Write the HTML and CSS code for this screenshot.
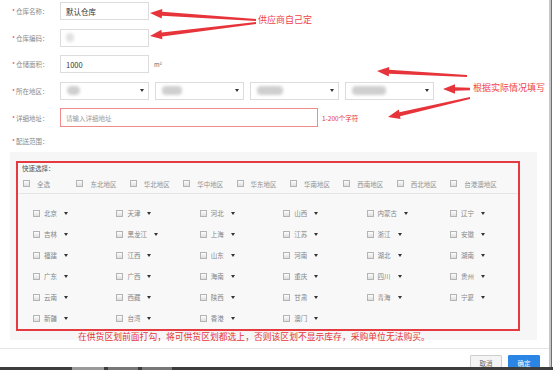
FILE: index.html
```html
<!DOCTYPE html>
<html lang="zh-CN">
<head>
    <meta charset="UTF-8">
    <title>仓库设置</title>
    <link rel="stylesheet" href="styles.css">
</head>
<body>
    <div class="screen">
        <div class="page">
            <div class="form">
                <div class="row">
                    <span class="label"><span class="star">*</span>仓库名称：</span>
                    <div class="input">默认仓库</div>
                </div>
                <div class="row">
                    <span class="label"><span class="star">*</span>仓库编码：</span>
                    <div class="input"><span class="blob blob-code"></span></div>
                </div>
                <div class="row">
                    <span class="label"><span class="star">*</span>仓储面积：</span>
                    <div class="input">1000</div>
                    <span class="unit">m²</span>
                </div>
                <div class="row">
                    <span class="label"><span class="star">*</span>所在地区：</span>
                    <div class="selects">
                        <div class="input select"><span class="blob blob-1"></span><i class="caret"></i></div>
                        <div class="input select"><span class="blob blob-2"></span><i class="caret"></i></div>
                        <div class="input select"><span class="blob blob-3"></span><i class="caret"></i></div>
                        <div class="input select"><span class="blob blob-4"></span><i class="caret"></i></div>
                    </div>
                </div>
                <div class="row row-address">
                    <span class="label"><span class="star">*</span>详细地址：</span>
                    <div class="input address">请输入详细地址</div>
                    <span class="hint">1-200个字符</span>
                </div>
            </div>

            <div class="range-label"><span class="star">*</span>配送范围：</div>

            <div class="panel">
                <div class="region-box">
                    <div class="quick-title">快速选择：</div>
                    <div class="quick">
                        <label class="quick-item"><i class="check"></i>全选</label>
                        <label class="quick-item"><i class="check"></i>东北地区</label>
                        <label class="quick-item"><i class="check"></i>华北地区</label>
                        <label class="quick-item"><i class="check"></i>华中地区</label>
                        <label class="quick-item"><i class="check"></i>华东地区</label>
                        <label class="quick-item"><i class="check"></i>华南地区</label>
                        <label class="quick-item"><i class="check"></i>西南地区</label>
                        <label class="quick-item"><i class="check"></i>西北地区</label>
                        <label class="quick-item"><i class="check"></i>台港澳地区</label>
                    </div>
                    <div class="sep"></div>
                    <div class="provinces">
                        <label class="item"><i class="check"></i>北京<i class="caret"></i></label>
                        <label class="item"><i class="check"></i>天津<i class="caret"></i></label>
                        <label class="item"><i class="check"></i>河北<i class="caret"></i></label>
                        <label class="item"><i class="check"></i>山西<i class="caret"></i></label>
                        <label class="item"><i class="check"></i>内蒙古<i class="caret"></i></label>
                        <label class="item"><i class="check"></i>辽宁<i class="caret"></i></label>

                        <label class="item"><i class="check"></i>吉林<i class="caret"></i></label>
                        <label class="item"><i class="check"></i>黑龙江<i class="caret"></i></label>
                        <label class="item"><i class="check"></i>上海<i class="caret"></i></label>
                        <label class="item"><i class="check"></i>江苏<i class="caret"></i></label>
                        <label class="item"><i class="check"></i>浙江<i class="caret"></i></label>
                        <label class="item"><i class="check"></i>安徽<i class="caret"></i></label>

                        <label class="item"><i class="check"></i>福建<i class="caret"></i></label>
                        <label class="item"><i class="check"></i>江西<i class="caret"></i></label>
                        <label class="item"><i class="check"></i>山东<i class="caret"></i></label>
                        <label class="item"><i class="check"></i>河南<i class="caret"></i></label>
                        <label class="item"><i class="check"></i>湖北<i class="caret"></i></label>
                        <label class="item"><i class="check"></i>湖南<i class="caret"></i></label>

                        <label class="item"><i class="check"></i>广东<i class="caret"></i></label>
                        <label class="item"><i class="check"></i>广西<i class="caret"></i></label>
                        <label class="item"><i class="check"></i>海南<i class="caret"></i></label>
                        <label class="item"><i class="check"></i>重庆<i class="caret"></i></label>
                        <label class="item"><i class="check"></i>四川<i class="caret"></i></label>
                        <label class="item"><i class="check"></i>贵州<i class="caret"></i></label>

                        <label class="item"><i class="check"></i>云南<i class="caret"></i></label>
                        <label class="item"><i class="check"></i>西藏<i class="caret"></i></label>
                        <label class="item"><i class="check"></i>陕西<i class="caret"></i></label>
                        <label class="item"><i class="check"></i>甘肃<i class="caret"></i></label>
                        <label class="item"><i class="check"></i>青海<i class="caret"></i></label>
                        <label class="item"><i class="check"></i>宁夏<i class="caret"></i></label>

                        <label class="item"><i class="check"></i>新疆<i class="caret"></i></label>
                        <label class="item"><i class="check"></i>台湾<i class="caret"></i></label>
                        <label class="item"><i class="check"></i>香港<i class="caret"></i></label>
                        <label class="item"><i class="check"></i>澳门<i class="caret"></i></label>
                    </div>
                </div>
                <p class="tip">在供货区划前面打勾，将可供货区划都选上，否则该区划不显示库存，采购单位无法购买。</p>
            </div>

            <div class="footer">
                <button class="btn btn-cancel">取消</button>
                <button class="btn btn-ok">确定</button>
            </div>
        </div>
        <div class="edge"></div>
    </div>
    <div class="taskbar">
        <span class="task task-a"></span>
        <span class="task task-b"></span>
        <span class="task task-c"></span>
    </div>

    <!-- annotations drawn over the form -->
    <div class="notes">
        <span class="note note-supplier">供应商自己定</span>
        <span class="note note-actual">根据实际情况填写</span>
        <svg class="arrows" width="553" height="370" viewBox="0 0 553 370">
            <polygon points="256,19 162.1,11.8 162.3,9 150,13 161.7,18.6 161.9,15.8 256,21"/>
            <polygon points="256,22 161.7,32.5 161.4,29.7 150,36 162.4,39.3 162.1,36.5 256,24"/>
            <polygon points="467,75 389.1,69.7 389.2,66.9 377,71 388.8,76.5 388.9,73.7 467,77"/>
            <polygon points="470,87.8 455,87.3 455,84.3 443,89 455,93.7 455,90.7 470,90.2"/>
            <polygon points="470,97 399.4,112.3 398.8,109.6 388,117 400.6,119 400,116.3 470,99"/>
        </svg>
    </div>
</body>
</html>
```

FILE: styles.css
```css
body {
    margin: 0;
    width: 553px;
    height: 370px;
    overflow: hidden;
    background: #fff;
    font-family: "Noto Sans CJK SC", "Noto Sans", sans-serif;
    position: relative;
}

.screen {
    display: flex;
    height: 367px;
}

.page {
    width: 549px;
    display: flex;
    flex-direction: column;
}

.edge {
    width: 2px;
    background: #c6c6c6;
    border-right: 1px solid #6f6f6f;
}

/* form rows */
.form {
    padding-top: 2px;
    display: flex;
    flex-direction: column;
    gap: 8.6px;
}

.row {
    display: flex;
    align-items: center;
    height: 18px;
}

.label {
    width: 60px;
    padding-left: 12px;
    box-sizing: border-box;
    font-size: 6.5px;
    color: #8a8a8a;
    white-space: nowrap;
}

.star {
    color: #e4393c;
    margin-right: 1px;
}

.input {
    width: 89px;
    height: 18px;
    box-sizing: border-box;
    border: 1px solid #dcdcdc;
    padding-left: 5px;
    font-size: 7.5px;
    color: #333;
    display: flex;
    align-items: center;
    background: #fff;
}

.unit {
    margin-left: 5px;
    font-size: 6px;
    color: #666;
}

.selects {
    display: flex;
    gap: 6px;
}

.select {
    justify-content: space-between;
    padding-left: 6px;
    padding-right: 4px;
}

.caret {
    display: inline-block;
    width: 0;
    height: 0;
    border-left: 2px solid transparent;
    border-right: 2px solid transparent;
    border-top: 3px solid #333;
}

.blob {
    display: block;
    height: 9px;
    background: #cfcfcf;
    border-radius: 4px;
    filter: blur(1.5px);
}

.blob-code { width: 8px; background: #e2e2e2; }
.blob-1 { width: 13px; border-radius: 6px; }
.blob-2 { width: 20px; }
.blob-3 { width: 26px; }
.blob-4 { width: 34px; }

.row-address {
    height: 19px;
}

.address {
    width: 258px;
    height: 19px;
    border-color: #f08b8b;
    color: #9a9a9a;
    font-size: 6.5px;
}

.hint {
    margin-left: 4px;
    font-size: 6.5px;
    color: #e4393c;
}

.range-label {
    margin-top: 10px;
    padding-left: 12px;
    line-height: 9px;
    font-size: 6.5px;
    color: #8a8a8a;
}

/* delivery range panel */
.panel {
    margin: 5.6px 12px 0 10px;
    height: 188px;
    box-sizing: border-box;
    padding: 9px 0 0 6px;
    background: #f6f6f6;
}

.region-box {
    width: 504px;
    height: 170px;
    box-sizing: border-box;
    border: 2px solid #e53a40;
    background: #f8f8f8;
}

.quick-title {
    padding: 1px 0 0 4px;
    line-height: 8px;
    font-size: 6.5px;
    color: #555;
}

.quick {
    display: grid;
    grid-template-columns: repeat(9, 53.4px);
    padding-left: 5px;
    margin-top: 7px;
    height: 10px;
}

.quick-item {
    display: flex;
    align-items: center;
    font-size: 6.5px;
    color: #929292;
    white-space: nowrap;
}

.quick-item .check {
    margin-right: 7px;
}

.sep {
    margin-top: 4px;
    border-top: 1px solid #e6e6e6;
}

.provinces {
    display: grid;
    grid-template-columns: repeat(6, 83.4px);
    grid-auto-rows: 21px;
    padding: 9px 0 0 15px;
}

.item {
    display: flex;
    align-items: center;
    font-size: 6.5px;
    color: #858585;
    white-space: nowrap;
}

.item .caret {
    margin-left: 7px;
}

.check {
    display: inline-block;
    width: 7px;
    height: 7px;
    margin-right: 4px;
    box-sizing: border-box;
    border: 1px solid #b4b4b4;
    background: linear-gradient(#fdfdfd, #dedede);
}

.tip {
    margin: 1px 0 0;
    padding-left: 62px;
    line-height: 10px;
    font-size: 8.8px;
    color: #e4393c;
    white-space: nowrap;
}

/* footer buttons */
.footer {
    margin-top: 8px;
    height: 19px;
    box-sizing: border-box;
    border-top: 1px solid #e6e6e6;
    padding: 6px 9px 0 0;
    display: flex;
    justify-content: flex-end;
    gap: 6px;
    overflow: hidden;
}

.btn {
    width: 32px;
    height: 16px;
    flex: none;
    padding: 0;
    font-family: inherit;
    font-size: 6.5px;
    border-radius: 1px;
}

.btn-cancel {
    background: #f4f4f4;
    border: 1px solid #cfcfcf;
    color: #666;
}

.btn-ok {
    background: #2b85e4;
    border: 1px solid #2b85e4;
    color: #fff;
}

.taskbar {
    height: 3px;
    background: #3d3d3d;
    display: flex;
}

.task {
    height: 3px;
    background: #9a9a9a;
}

.task-a { margin-left: 72px; width: 32px; }
.task-b { margin-left: 4px; width: 30px; background: #777; }
.task-c { margin-left: 4px; width: 30px; background: #777; }

/* red annotations */
.notes {
    position: absolute;
    left: 0;
    top: 0;
    width: 553px;
    height: 370px;
    pointer-events: none;
}

.note {
    position: absolute;
    font-size: 9px;
    line-height: 12px;
    color: #ee4349;
    white-space: nowrap;
}

.note-supplier { left: 258px; top: 14px; }
.note-actual { left: 473px; top: 82px; }

.arrows {
    position: absolute;
    left: 0;
    top: 0;
}

.arrows polygon {
    fill: #e7343a;
}
```
